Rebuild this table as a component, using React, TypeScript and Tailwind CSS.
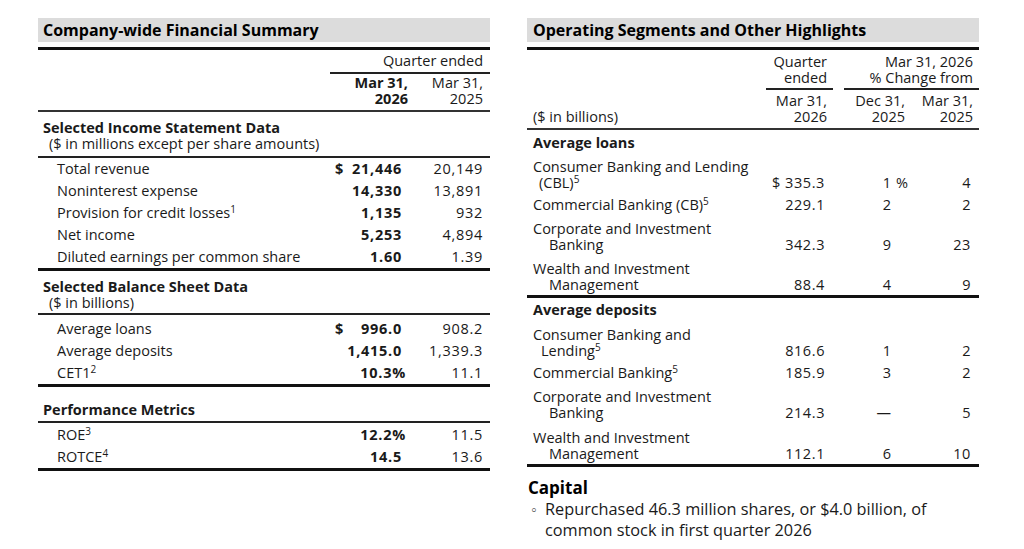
import React from "react";

const L = "grid grid-cols-[292px_85px_75px]";
const R = "grid grid-cols-[234px_74px_75px_69px]";

type LRowProps = { label: string; sup?: string; dollar?: boolean; cur: string; prev: string };

const LRow = ({ label, sup, dollar, cur, prev }: LRowProps) => {
  const pct = cur.endsWith("%");
  return (
    <div className={`${L} h-[22px] items-center leading-[22px]`}>
      <div className="pl-[19px]">
        {label}
        {sup && <sup className="text-[10px]">{sup}</sup>}
      </div>
      <div className="flex justify-between pl-[5px] pr-[13px] font-bold tracking-[0.05em]">
        <span>{dollar ? "$" : ""}</span>
        <span className={pct ? "-mr-[4px]" : ""}>{cur}</span>
      </div>
      <div className="pr-[7px] text-right tracking-[0.05em]">{prev}</div>
    </div>
  );
};

type RRowProps = {
  first: string;
  second?: string;
  indent?: "sm" | "md" | "lg";
  sup?: string;
  a: string;
  b: string;
  pct?: boolean;
  c: string;
  pad: string;
};

const RRow = ({ first, second, indent, sup, a, b, pct, c, pad }: RRowProps) => {
  const ind = indent === "lg" ? "pl-[22px]" : indent === "md" ? "pl-[14px]" : "pl-[12px]";
  const supEl = sup ? <sup className="text-[10px]">{sup}</sup> : null;
  return (
    <div className={`${R} items-end leading-[16px] ${pad}`}>
      <div>
        <div className="pl-[6px]">
          {first}
          {!second && supEl}
        </div>
        {second && (
          <div className={ind}>
            {second}
            {supEl}
          </div>
        )}
      </div>
      <div className="pr-[10px] text-right tracking-[0.04em]">{a}</div>
      <div className="flex justify-end pr-[2px]">
        <span>{b}</span>
        <span className="w-[17px] text-right">{pct ? "%" : ""}</span>
      </div>
      <div className="pr-[8px] text-right tracking-[0.04em]">{c}</div>
    </div>
  );
};

const LeftPanel = () => (
  <div className="w-[452px]">
    <div className="h-[24px] bg-[#dcdcdc] pl-[5px] text-[16px] font-bold leading-[24px] text-black">
      Company-wide Financial Summary
    </div>
    <div className="mt-[5px] h-[3px] bg-[#111]" />
    <div className={L}>
      <div />
      <div className="col-span-2 h-[22px] pr-[7px] text-right leading-[22px]">Quarter ended</div>
    </div>
    <div className={L}>
      <div />
      <div className="col-span-2 h-[2px] bg-[#222]" />
    </div>
    <div className={`${L} pt-[1px] pb-[3px] leading-[16px]`}>
      <div />
      <div className="pr-[7px] text-right font-bold">
        Mar 31,
        <br />
        2026
      </div>
      <div className="pr-[7px] text-right">
        Mar 31,
        <br />
        2025
      </div>
    </div>
    <div className="h-[2px] bg-[#333]" />

    {/* income statement */}
    <div className="pt-[8px] pb-[4px] leading-[16px]">
      <div className="pl-[5px] font-bold">Selected Income Statement Data</div>
      <div className="pl-[11px]">($ in millions except per share amounts)</div>
    </div>
    <div className="h-[2px] bg-[#222]" />
    <LRow label="Total revenue" dollar cur="21,446" prev="20,149" />
    <LRow label="Noninterest expense" cur="14,330" prev="13,891" />
    <LRow label="Provision for credit losses" sup="1" cur="1,135" prev="932" />
    <LRow label="Net income" cur="5,253" prev="4,894" />
    <LRow label="Diluted earnings per common share" cur="1.60" prev="1.39" />
    <div className="h-[3px] bg-[#111]" />

    {/* balance sheet */}
    <div className="pt-[8px] pb-[2px] leading-[16px]">
      <div className="pl-[5px] font-bold">Selected Balance Sheet Data</div>
      <div className="pl-[11px]">($ in billions)</div>
    </div>
    <div className="h-[2px] bg-[#222]" />
    <div className="pt-[3px]">
      <LRow label="Average loans" dollar cur="996.0" prev="908.2" />
      <LRow label="Average deposits" cur="1,415.0" prev="1,339.3" />
      <LRow label="CET1" sup="2" cur="10.3%" prev="11.1" />
    </div>
    <div className="h-[3px] bg-[#111]" />

    {/* performance */}
    <div className="pt-[15px] pb-[3px] pl-[5px] font-bold leading-[16px]">Performance Metrics</div>
    <div className="h-[2px] bg-[#222]" />
    <div className="pt-[1px]">
      <LRow label="ROE" sup="3" cur="12.2%" prev="11.5" />
      <LRow label="ROTCE" sup="4" cur="14.5" prev="13.6" />
    </div>
    <div className="h-[3px] bg-[#111]" />
  </div>
);

const RightPanel = () => (
  <div className="w-[452px]">
    <div className="h-[24px] bg-[#dcdcdc] pl-[6px] text-[16px] font-bold leading-[24px] text-black">
      Operating Segments and Other Highlights
    </div>
    <div className="mt-[5px] h-[3px] bg-[#111]" />
    <div className={`${R} pt-[4px] pb-[2px] leading-[16px]`}>
      <div />
      <div className="pr-[8px] text-right">
        Quarter
        <br />
        ended
      </div>
      <div className="col-span-2 pr-[6px] text-right">
        Mar 31, 2026
        <br />% Change from
      </div>
    </div>
    <div className={R}>
      <div />
      <div className="ml-[5px] mr-[2px] h-[2px] bg-[#222]" />
      <div className="col-span-2 ml-[9px] h-[2px] bg-[#222]" />
    </div>
    <div className={`${R} items-end pt-[3px] pb-[3px] leading-[16px]`}>
      <div className="pl-[6px]">($ in billions)</div>
      <div className="pr-[8px] text-right">
        Mar 31,
        <br />
        2026
      </div>
      <div className="pr-[5px] text-right">
        Dec 31,
        <br />
        2025
      </div>
      <div className="pr-[6px] text-right">
        Mar 31,
        <br />
        2025
      </div>
    </div>
    <div className="h-[2px] bg-[#333]" />

    <div className="h-[25px] pl-[6px] font-bold leading-[25px]">Average loans</div>
    <RRow first="Consumer Banking and Lending" second="(CBL)" indent="sm" sup="5" a="$ 335.3" b="1" pct c="4" pad="pt-[4px] pb-[3px]" />
    <RRow first="Commercial Banking (CB)" sup="5" a="229.1" b="2" c="2" pad="pt-[3px] pb-[3px]" />
    <RRow first="Corporate and Investment" second="Banking" indent="lg" a="342.3" b="9" c="23" pad="pt-[5px] pb-[3px]" />
    <RRow first="Wealth and Investment" second="Management" indent="lg" a="88.4" b="4" c="9" pad="pt-[5px] pb-[2px]" />
    <div className="h-[3px] bg-[#111]" />

    <div className="h-[24px] pl-[6px] font-bold leading-[24px]">Average deposits</div>
    <RRow first="Consumer Banking and" second="Lending" indent="md" sup="5" a="816.6" b="1" c="2" pad="pt-[5px] pb-[3px]" />
    <RRow first="Commercial Banking" sup="5" a="185.9" b="3" c="2" pad="pt-[3px] pb-[3px]" />
    <RRow first="Corporate and Investment" second="Banking" indent="lg" a="214.3" b="—" c="5" pad="pt-[5px] pb-[3px]" />
    <RRow first="Wealth and Investment" second="Management" indent="lg" a="112.1" b="6" c="10" pad="pt-[6px] pb-[2px]" />
    <div className="h-[3px] bg-[#111]" />

    <div className="mt-[11px] pl-[1px] text-[17px] font-bold leading-[20px] text-black">Capital</div>
    <div className="mt-[1px] flex text-[16.3px] leading-[21px]">
      <span className="w-[18px] pl-[4px] text-[16px] text-[#555]">◦</span>
      <span className="w-[420px]">
        Repurchased 46.3 million shares, or $4.0 billion, of
        <br />
        common stock in first quarter 2026
      </span>
    </div>
  </div>
);

export default function App() {
  return (
    <div className="h-[549px] w-[1024px] overflow-hidden bg-white font-['Open_Sans','Noto_Sans',sans-serif] text-[14.5px] text-[#1a1a1a]">
      <div className="flex gap-[37px] pt-[18px] pl-[38px]">
        <LeftPanel />
        <RightPanel />
      </div>
    </div>
  );
}
